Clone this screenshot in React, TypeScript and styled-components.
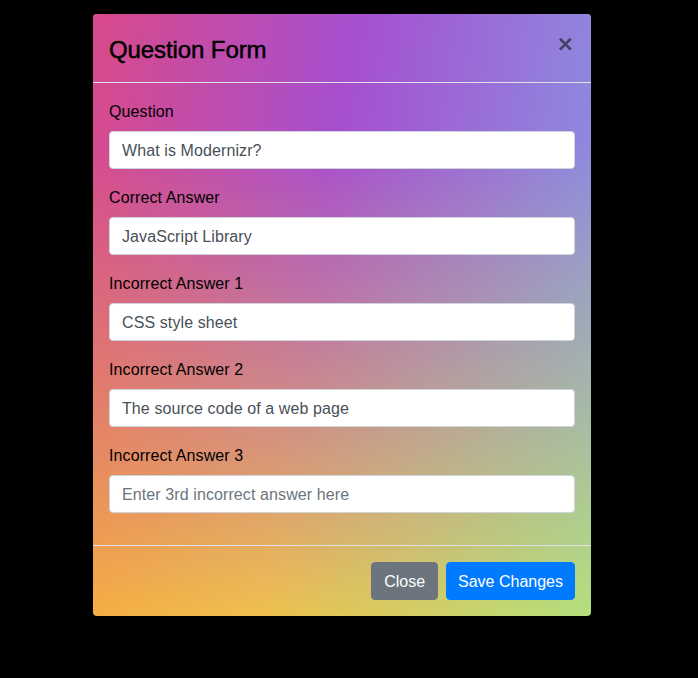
import React from "react";
import styled, { createGlobalStyle } from "styled-components";

const Global = createGlobalStyle`
  html, body { margin: 0; padding: 0; background: #000; }
  body { font-family: "Liberation Sans", Arial, sans-serif; }
  * { box-sizing: border-box; }
`;

const Backdrop = styled.div`
  width: 698px;
  height: 678px;
  background: #000;
  padding: 13px 0 0 92px;
`;

const Dialog = styled.div`
  position: relative;
  width: 500px;
  border: 1px solid rgba(0, 0, 0, 0.2);
  border-radius: 5px;
  overflow: hidden;
  background-clip: padding-box;
  background-image: linear-gradient(100deg, #f8a43e 0%, #f0c04e 45%, #b4e07c 100%);
  color: #212529;
  &::before {
    content: "";
    position: absolute;
    inset: 0;
    background: linear-gradient(98deg, #d94a8a 0%, #a64fcf 45%, #8898e2 100%);
    -webkit-mask-image: linear-gradient(180deg, #000 22%, rgba(0,0,0,0.5) 62%, transparent 100%);
    mask-image: linear-gradient(180deg, #000 22%, rgba(0,0,0,0.5) 62%, transparent 100%);
  }
`;

const Content = styled.div`
  position: relative;
  display: flex;
  flex-direction: column;
`;

const Header = styled.div`
  display: flex;
  align-items: flex-start;
  justify-content: space-between;
  padding: 16px;
  border-bottom: 1px solid #dee2e6;
`;

const Title = styled.h5`
  margin: 0;
  padding-top: 2px;
  height: 36px;
  font-size: 24px;
  font-weight: 500;
  line-height: 36px;
  color: #000;
  -webkit-text-stroke: 0.5px #000;
  letter-spacing: -0.1px;
`;

const CloseX = styled.button`
  background: transparent;
  border: 0;
  padding: 0 2px 0 0;
  margin: 1px 0 0 0;
  font-family: "Liberation Sans", Arial, sans-serif;
  font-size: 26px;
  font-weight: 700;
  line-height: 1;
  color: #000;
  opacity: 0.5;
  text-shadow: 0 1px 0 rgba(255, 255, 255, 0.3);
  cursor: pointer;
`;

const Body = styled.div`
  padding: 16px;
`;

const Group = styled.div`
  margin-bottom: 16px;
`;

const Label = styled.label`
  display: block;
  padding-top: 1px;
  margin-bottom: 7px;
  font-size: 16px;
  line-height: 24px;
  color: #000;
  letter-spacing: 0.1px;
`;

const Input = styled.input`
  display: block;
  width: 100%;
  height: 38px;
  padding: 7px 12px 5px;
  font-family: "Liberation Sans", Arial, sans-serif;
  font-size: 16px;
  line-height: 24px;
  letter-spacing: 0.1px;
  color: #495057;
  background: #fff;
  border: 1px solid #ced4da;
  border-radius: 4px;
  outline: none;
  &::placeholder { color: #6c757d; opacity: 1; }
`;

const Footer = styled.div`
  display: flex;
  justify-content: flex-end;
  align-items: center;
  gap: 8px;
  padding: 16px;
  border-top: 1px solid #dee2e6;
`;

const Button = styled.button<{ $variant: "primary" | "secondary" }>`
  height: 38px;
  padding: 7px ${(p) => (p.$variant === "primary" ? "11px" : "12px")} 5px;
  font-family: "Liberation Sans", Arial, sans-serif;
  font-size: 16px;
  line-height: 24px;
  color: #fff;
  border: 1px solid ${(p) => (p.$variant === "primary" ? "#007bff" : "#6c757d")};
  background: ${(p) => (p.$variant === "primary" ? "#007bff" : "#6c757d")};
  border-radius: 4px;
  cursor: pointer;
`;

const fields = [
  { label: "Question", value: "What is Modernizr?" },
  { label: "Correct Answer", value: "JavaScript Library" },
  { label: "Incorrect Answer 1", value: "CSS style sheet" },
  { label: "Incorrect Answer 2", value: "The source code of a web page" },
  { label: "Incorrect Answer 3", value: "", placeholder: "Enter 3rd incorrect answer here" },
];

export default function App() {
  return (
    <>
      <Global />
      <Backdrop>
        <Dialog>
          <Content>
            <Header>
              <Title>Question Form</Title>
              <CloseX aria-label="Close">×</CloseX>
            </Header>
            <Body>
              {fields.map((f) => (
                <Group key={f.label}>
                  <Label>{f.label}</Label>
                  <Input defaultValue={f.value} placeholder={f.placeholder} />
                </Group>
              ))}
            </Body>
            <Footer>
              <Button $variant="secondary">Close</Button>
              <Button $variant="primary">Save Changes</Button>
            </Footer>
          </Content>
        </Dialog>
      </Backdrop>
    </>
  );
}
